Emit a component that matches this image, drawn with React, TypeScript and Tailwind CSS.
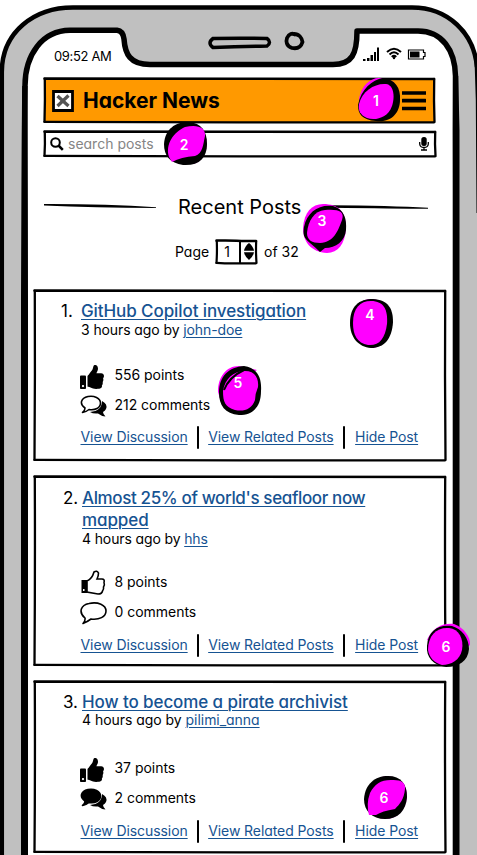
import React from "react";
import { FaThumbsUp } from "react-icons/fa";

type BlobProps = { n: string; w: number; h: number; base: string; ink: string; fill: string; scratch?: string; tx: number; ty: number; className: string };

// Hand-inked numbered marker
function Marker({ n, w, h, base, ink, fill, scratch, tx, ty, className }: BlobProps) {
  return (
    <div className={`absolute ${className}`}>
      <svg width={w} height={h} viewBox={`0 0 ${w} ${h}`} className="block">
        <path d={base} fill="#ff00ff" />
        <path d={ink} fill="#000" />
        <path d={fill} fill="#ff00ff" />
        {scratch && <path d={scratch} fill="none" stroke="#000" strokeWidth="2" />}
        <text x={tx} y={ty} textAnchor="middle" fill="#fff" fontSize="14" fontWeight="600">{n}</text>
      </svg>
    </div>
  );
}

// Slightly uneven pen outline around a box
function Outline({ w, h, top = 2.6, side = 2.3 }: { w: number; h: number; top?: number; side?: number }) {
  return (
    <svg width={w} height={h} viewBox={`0 0 ${w} ${h}`} className="pointer-events-none absolute left-0 top-0" fill="none" stroke="#000" strokeLinecap="round">
      <path d={`M1.500 1.600Q${w / 3} 1.300 ${w / 2} 1.800T${w - 2} 2`} strokeWidth={top} />
      <path d={`M${w - 1.800} 2Q${w - 2.300} ${h / 2} ${w - 1.500} ${h - 2}`} strokeWidth={side} />
      <path d={`M1.500 ${h - 2.100}Q${w / 4} ${h - 1.500} ${w / 2} ${h - 1.600}T${w - 2} ${h - 1.700}`} strokeWidth={side} />
      <path d={`M1.800 2Q2.200 ${h / 2} 1.500 ${h - 2.100}`} strokeWidth={side} />
    </svg>
  );
}

function Phone() {
  return (
    <svg width="477" height="855" viewBox="0 0 477 855" className="absolute left-0 top-0">
      <path d="M2 860V72C2 32 34 7.500 73 7.500H412C448 7.500 478 36 478 75V860Z" fill="#c0c0c0" />
      <path d="M24.500 860V300C25 200 24 130 25 86C25 55 42 30.500 70 30.300H117Q123 31 124 39C125 54 130 64.500 150 64.500H333C352 64.500 357 54 357 31H418C442 31 455 50 455.500 76L456 300V860" fill="#fff" stroke="#000" strokeWidth="5.500" strokeLinejoin="round" />
      <path d="M22.200 86L27.500 86L27.800 210L28 300V860H21V300L21.500 190ZM453 76H458.200L459.500 130V860H452.700V130Z" />
      <path d="M1.800 860V72C2 32 34 7.500 73 7.500H412C448 7.500 474 33 477 67" fill="none" stroke="#000" strokeWidth="4.500" />
      <path d="M474.500 60L477 60V213H476.500L475.800 100Z" />
      <path d="M213 38.500Q240 38 267 38.500Q272 42 267 46Q240 46.500 213 47.500Q207 43 213 38.500Z" fill="none" stroke="#000" strokeWidth="3.500" />
      <path d="M294 34C299 34 302 38 302.500 42C301 47 297 49 292 48C286 46 286 41 287 38C289 34 292 32.500 296 35" fill="none" stroke="#000" strokeWidth="3.800" />
    </svg>
  );
}

function Thumb({ solid }: { solid?: boolean }) {
  if (solid) return <FaThumbsUp size={24} className="mr-0.5 block" />;
  return (
    <svg width="26" height="25" viewBox="0 0 26 25" className="-mt-0.5 block">
      <path d="M1.500 10H7V23H1.500Z" />
      <path d="M7 11Q12 9 14 2Q17 0 18.500 3Q18.500 6 17 9H22Q25 9 24 12.500Q25 15 23.500 17Q24 19 22.500 21Q22 24 18 24L7 22Z" fill="#fff" stroke="#000" strokeWidth="1.600" />
      <rect x="3" y="19" width="1.500" height="2" fill="#fff" />
    </svg>
  );
}

function Bubble({ kind }: { kind: "two" | "one" | "solid" }) {
  return (
    <svg width="28" height="24" viewBox="0 0 28 24" className="block" strokeLinejoin="round">
      {kind === "one" ? (
        <path d="M5 16C-2 10 1 3 9 1.500C18-.5 26 3 26 9C26 15 19 18 11 17Q7 20 3 21.500Q5.500 19 5 16Z" fill="#fff" stroke="#000" strokeWidth="1.600" />
      ) : (
        <>
          <path d="M22 6Q28 9 26 14Q25 16 23 17Q23 19 25.500 21.500Q21 21 18 18.500Q13 19 10 17Q22 16 22 6Z" />
          <path d="M5 13C-1 9 1 3 8 1.500C14 .3 20.500 3 20.500 8C20.500 13 15 15.500 9 14.500Q6 17 2.500 17.500Q5 16 5 13Z" fill={kind === "solid" ? "#000" : "#fff"} stroke="#000" strokeWidth="1.600" />
        </>
      )}
    </svg>
  );
}

const link = "text-[#165392] underline decoration-1 underline-offset-2";

type Post = { no: string; title: React.ReactNode; age: string; by: string; points: string; comments: string; up?: boolean; kind: "two" | "one" | "solid"; h: number; card: string; head: string; stats: string; num: string; meta: string; nav: string };

function Card({ p }: { p: Post }) {
  return (
    <article className={`relative ml-[33px] w-[414px] ${p.card}`}>
      <Outline w={414} h={p.h} />
      <div className={`flex ${p.head}`}>
        <span className={`shrink-0 text-[17px] leading-[22px] ${p.num}`}>{p.no}</span>
        <div>
          <h2 className={`text-[17px] leading-[22px] font-[450] tracking-[-0.09px] ${link}`}>{p.title}</h2>
          <p className={`text-[14px] leading-[17px] ${p.meta}`}>{p.age} ago by <a className={link}>{p.by}</a></p>
        </div>
      </div>
      <div className={`ml-[47px] ${p.stats}`}>
        <div className="flex h-[30px] items-start"><Thumb solid={p.up} /><span className="ml-[8.500px] text-[14px] leading-[20px] tracking-[-0.03px]">{p.points}</span></div>
        <div className="flex h-[30px] items-start"><Bubble kind={p.kind} /><span className="ml-[6.500px] text-[14px] leading-[20px] tracking-[-0.03px]">{p.comments}</span></div>
        <nav className={`ml-[0.500px] flex items-center whitespace-nowrap text-[14px] leading-[24px] tracking-[-0.08px] ${p.nav}`}>
          <a className={link}>View Discussion</a>
          <i className="mx-[9px] h-[23px] w-[2.500px] rounded bg-black" />
          <a className={link}>View Related Posts</a>
          <i className="mr-[10px] ml-[9px] h-[23px] w-[2.500px] rounded bg-black" />
          <a className={link}>Hide Post</a>
        </nav>
      </div>
    </article>
  );
}

const posts: Post[] = [
  { no: "1.", title: "GitHub Copilot investigation", age: "3 hours", by: "john-doe", points: "556 points", comments: "212 comments", up: true, kind: "two", h: 173, card: "mt-[24px] h-[173px]", head: "pt-[11px] pl-[28px]", num: "w-[20px]", meta: "-mt-px tracking-[-0.1px]", stats: "mt-[27px]", nav: "" },
  { no: "2.", title: <><span className="tracking-[-0.37px]">Almost 25% of world's seafloor now</span><br />mapped</>, age: "4 hours", by: "hhs", points: "8 points", comments: "0 comments", kind: "one", h: 192, card: "mt-[13px] h-[192px]", head: "pt-[12px] pl-[30px]", num: "w-[19px]", meta: "-mt-px tracking-[-0.13px]", stats: "mt-[25px]", nav: "mt-px" },
  { no: "3.", title: "How to become a pirate archivist", age: "4 hours", by: "pilimi_anna", points: "37 points", comments: "2 comments", up: true, kind: "solid", h: 174, card: "mt-[13px] h-[174px]", head: "pt-[11px] pl-[30px]", num: "w-[19px]", meta: "-mt-[2px] tracking-[-0.04px]", stats: "mt-[30px]", nav: "mt-px" },
];

export default function App() {
  return (
    <div className="relative h-[855px] w-[477px] overflow-hidden bg-white text-black [font-family:Inter,'Liberation_Sans',sans-serif] [font-feature-settings:'cv11']">
      <Phone />
      <div className="relative flex flex-col">
        <div className="flex h-[77px] items-start justify-between pt-[46px] pr-[51px] pl-[54px]">
          <span className="text-[13px] leading-[20px] tracking-[-0.35px]">09:52 AM</span>
          <svg width="63" height="17" viewBox="0 0 63 17">
            <path d="M0 15V13H2.500V15ZM4 15V12H6.500V15ZM7.500 15V9H10V15ZM11 15V6H13V15ZM14 15V1.500H16V15Z" />
            <path d="M24 6Q31-.5 38 6M26.500 8.500Q31 4 35.500 8.500M28.800 11Q31 8.800 33.200 11" fill="none" stroke="#000" strokeWidth="2" />
            <circle cx="31" cy="12" r="1.200" />
            <path d="M45.500 4H60.500V6.500H62V10.500H60.500V13H45.500Z" fill="none" stroke="#000" strokeWidth="1.200" />
            <path d="M47 5.500H56.500V11.500H47Z" />
          </svg>
        </div>
        <header className="relative ml-[43px] flex h-[47px] w-[393px] items-center pr-[10px] pl-[9px]">
          <i className="absolute inset-[2px] bg-[#ff9900]" />
          <Outline w={393} h={47} />
          <svg width="22" height="22" viewBox="0 0 22 22" className="relative"><path d="M1.500 1.500H20.500V20.500H1.500Z" fill="#fff" stroke="#000" strokeWidth="2.800" /><path d="M5.500 6L16.500 16M16.500 5.500L5.500 16" stroke="#555" strokeWidth="3.300" /></svg>
          <h1 className="relative ml-[9px] text-[21px] font-bold leading-[28px]">Hacker News</h1>
          <svg width="24" height="20" viewBox="0 0 24 20" className="relative ml-auto"><path d="M0.500 2H23.500M0.500 9.700H23.500M0.500 17.500H23.500" stroke="#000" strokeWidth="3.700" strokeLinecap="round" /></svg>
        </header>
        <div className="relative mt-[6px] ml-[43px] flex h-[28px] w-[394px] items-center pr-[8px] pl-[7px]">
          <Outline w={394} h={28} />
          <svg width="14" height="14" viewBox="0 0 14 14" fill="none" stroke="#000"><circle cx="5.500" cy="5.500" r="4.300" strokeWidth="2" /><path d="M8.500 8.500L12.800 12.800" strokeWidth="2.500" /></svg>
          <span className="-mt-px ml-[4px] text-[14px] leading-[20px] text-[#858585]">search posts</span>
          <svg width="10" height="14" viewBox="0 0 10 14" className="ml-auto"><rect x="2.300" y="0" width="5.400" height="9" rx="2.500" /><path d="M.7 5V7Q1 10.500 5 10.500Q9 10.500 9.300 7V5M5 10V13M2 13H8" fill="none" stroke="#000" strokeWidth="1.300" /></svg>
        </div>
        <div className="mt-[35px] ml-[44px] flex h-[28px] w-[384px] items-center">
          <svg width="113" height="8" viewBox="0 0 113 8"><path d="M0 1Q60 .8 112 4.200L112 5Q50 4.500 0 2.500Z" /></svg>
          <h2 className="ml-[21px] text-[20px] leading-[28px] whitespace-nowrap">Recent Posts</h2>
          <svg width="98" height="8" viewBox="0 0 98 8" className="ml-auto"><path d="M0 2.200Q60 2.500 98 4.800V5.800Q65 5.500 0 4.700Z" /></svg>
        </div>
        <div className="mt-[17px] ml-[175px] flex h-[27px] items-center text-[14px] leading-[20px]">
          <span className="w-[40px]">Page</span>
          <div className="relative flex h-[26px] w-[43px] items-center">
            <Outline w={43} h={26} top={2.5} side={2.2} />
            <span className="w-[24px] text-center">1</span>
            <i className="h-[23px] w-[2px] bg-black" />
            <svg width="10" height="17" viewBox="0 0 10 17" className="ml-[2.500px]"><path d="M0 7.800Q1 3 5 0Q9 3 10 7.800ZM0 9.200H10Q9 14 5 17Q1 14 0 9.200Z" /></svg>
          </div>
          <span className="ml-[6px]">of 32</span>
        </div>
        {posts.map((p) => <Card key={p.no} p={p} />)}
      </div>
      <Marker className="left-[357px] top-[77px]" n="1" w={46} h={46} tx={19} ty={29} base="M2 22C4 8 15 0 23 1L37 5L24 18L2 30Z" ink="M1 28C4 12 15 3 26 1C38 2 44 11 43 23C43 36 34 46 19 44C5 43 1 37 1 28Z" fill="M2 27C5 14 18 6 29 7C37 8 38 20 35 29C31 41 18 44 10 41C3 38 1 33 2 27Z" />
      <Marker className="left-[163px] top-[121px]" n="2" w={46} h={46} tx={21} ty={29} base="M3 17C7 5 18 1 32 4Q43 7 44 23Q42 40 30 43L7 38Z" ink="M1 23C2 8 12 1 26 1C38 2 44 10 44 23C44 37 36 45 20 44C7 42 1 35 1 23Z" fill="M6 36C2 23 11 11 22 6C34 3 43 6 42 15C40 24 40 32 32 35Q18 36 9 41Z" />
      <Marker className="left-[302px] top-[203px]" n="3" w={45} h={51} tx={20} ty={23} base="M1 25C2 9 10 1 21 1C37 1 44 9 44 25C43 41 36 50 25 50C9 49 1 39 1 25Z" ink="M2 24C5 9 17 1 31 3C42 6 45 16 44 27C43 38 34 45 23 45L18 49Q14 45 8 40C1 34 1 31 2 24Z" fill="M5 30C6 18 12 8 23 7C36 6 43 8 40 17C36 28 32 39 18 40C10 40 5 37 5 30Z" />
      <Marker className="left-[349px] top-[298px]" n="4" w={45} h={51} tx={21} ty={22} base="M2 25C2 8 12 1 23 1Q43 3 43 25Q39 49 23 50Q3 46 2 25Z" ink="M1 25C1 8 10 1 24 1C39 2 44 10 44 24C43 41 35 50 22 50C9 49 1 39 1 25Z" fill="M4 25C4 10 11 3 22 3C35 3 39 12 38 26C36 41 30 48 19 47C8 45 4 37 4 25Z" />
      <Marker className="left-[217px] top-[365px]" n="5" w={46} h={51} tx={21} ty={23} base="M1 27C1 12 9 1 22 1L40 5L18 20L5 40Z" ink="M2 28C2 11 12 2 27 1C40 3 45 12 44 26C44 42 36 50 22 50C8 49 2 40 2 28Z" fill="M6 26C8 14 16 6 28 6C37 6 42 12 41 22Q38 29 38 35C35 44 27 47 18 45C8 42 6 37 6 26Z" scratch="M7 25Q12 12 27 5" />
      <Marker className="left-[425px] top-[623px]" n="6" w={46} h={45} tx={21} ty={29} base="M2 17C8 4 18 0 29 1C38 4 46 14 45 22L29 35Z" ink="M2 23C3 7 14 1 27 3C37 6 44 15 44 26C43 38 34 44 21 44C8 42 1 34 2 23Z" fill="M3 27C3 12 12 4 24 5C34 6 39 16 37 27C35 37 26 42 17 42C9 40 4 34 3 27Z" />
      <Marker className="left-[363px] top-[775px]" n="6" w={46} h={46} tx={21} ty={28} base="M2 24Q4 3 25 1Q45 4 44 23Q40 43 23 44Q5 43 2 24Z" ink="M1 24C2 9 12 1 25 1C38 1 44 9 44 22C43 36 35 44 22 44C9 44 1 36 1 24Z" fill="M6 40Q3 29 7 18C12 9 17 5 28 5Q43 4 42 14C41 24 37 29 32 34Q19 36 13 40Z" />
    </div>
  );
}
